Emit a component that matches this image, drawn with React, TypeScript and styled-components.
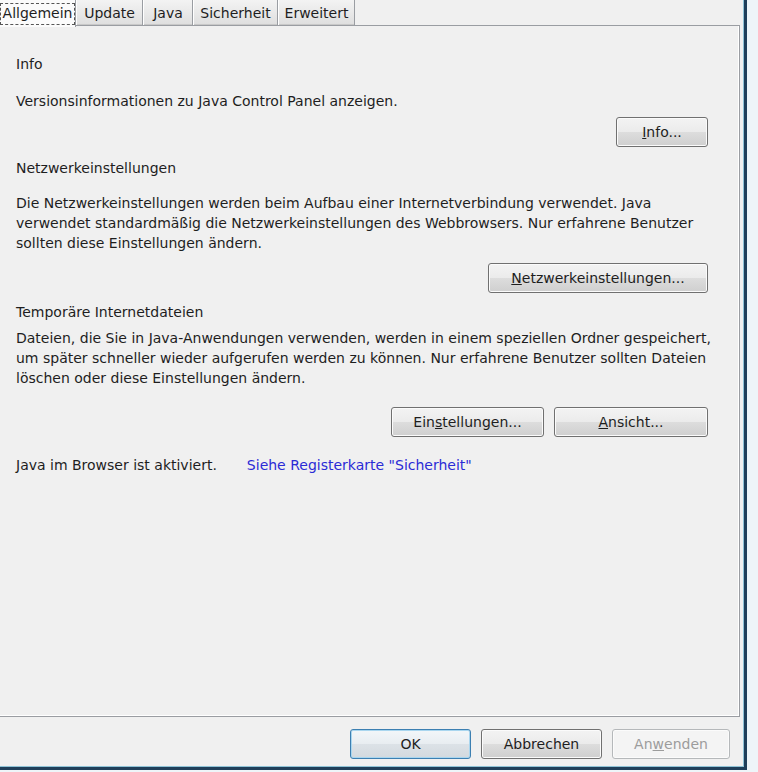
import styled, {createGlobalStyle} from "styled-components";

const GlobalStyle = createGlobalStyle`
  html, body {
    margin: 0;
    padding: 0;
    background: #eef5f9;
  }
  body {
    font-family: "DejaVu Sans", Tahoma, sans-serif;
    font-size: 14px;
    color: #1e1e1e;
  }
`;

const Window = styled.div`
  width: 744px;
  height: 767px;
  background: #f0f0f0;
  border-right: 3px solid #1f3f5a;
  border-bottom: 3px solid #1f3f5a;
  box-shadow: inset -1px -1px 0 #8fc3d6;
  display: flex;
  flex-direction: column;
`;

const TabStrip = styled.div`
  height: 25px;
  display: flex;
  align-items: flex-start;
  position: relative;
  z-index: 1;
`;

const Tab = styled.div<{ active?: boolean }>`
  display: flex;
  align-items: ${(p) => (p.active ? "flex-start" : "center")};
  justify-content: center;
  box-sizing: border-box;
  height: ${(p) => (p.active ? "27px" : "25px")};
  padding: 0 2px;
  background: ${(p) =>
    p.active ? "#fbfbfb" : "linear-gradient(#f3f3f3, #e9e9e9 50%, #dedede)"};
  border-right: 1px solid #9a9da2;
  border-left: ${(p) => (p.active ? "none" : "1px solid #fff")};
  box-shadow: ${(p) => (p.active ? "none" : "inset 0 -1px 0 #c8c8c8")};
  white-space: nowrap;
  font-size: 14px;
`;

const FocusLabel = styled.span`
  display: block;
  box-sizing: border-box;
  margin-top: 3px;
  height: 22px;
  line-height: 19px;
  padding: 0 2px;
  border: 1px dashed #555;
`;

const Panel = styled.div`
  width: 740px;
  height: 692px;
  box-sizing: border-box;
  border-top: 1px solid #9a9da2;
  border-right: 1px solid #9a9da2;
  border-bottom: 1px solid #9a9da2;
  box-shadow: inset -1px -1px 0 #ffffff;
  padding: 28px 31px 0 16px;
  display: flex;
  flex-direction: column;
`;

const Line = styled.div<{ gap?: number }>`
  line-height: 20px;
  white-space: nowrap;
  margin-top: ${(p) => p.gap ?? 0}px;
`;

const ButtonRow = styled.div<{ gap?: number }>`
  display: flex;
  justify-content: flex-end;
  gap: 10px;
  margin-top: ${(p) => p.gap ?? 0}px;
`;

const Button = styled.button<{ width: number; variant?: "default" | "disabled" }>`
  width: ${(p) => p.width}px;
  height: 30px;
  box-sizing: border-box;
  border: 1px solid
    ${(p) =>
      p.variant === "default" ? "#3c7fb1" : p.variant === "disabled" ? "#b5b8ba" : "#707070"};
  border-radius: 3px;
  background: ${(p) =>
    p.variant === "disabled"
      ? "#f4f4f4"
      : p.variant === "default"
      ? "linear-gradient(#f2f6f9, #e8edf1 50%, #dce2e7 50%, #d3d9de)"
      : "linear-gradient(#f3f3f3, #ebebeb 50%, #dddddd 50%, #cfcfcf)"};
  box-shadow: inset 0 0 0 1px
    ${(p) => (p.variant === "default" ? "#a9d6ef" : "#fbfbfb")};
  font-family: "DejaVu Sans", Tahoma, sans-serif;
  font-size: 14px;
  color: ${(p) => (p.variant === "disabled" ? "#9c9c9c" : "#1e1e1e")};
  padding: 0;
`;

const Link = styled.span`
  color: #2b2bd6;
  margin-left: 30px;
`;

const Footer = styled.div`
  display: flex;
  justify-content: flex-end;
  gap: 10px;
  padding: 12px 14px 0 0;
`;

export default function App() {
  return (
    <>
      <GlobalStyle/>
      <Window>
        <TabStrip>
          <Tab active style={{width: 76}}>
            <FocusLabel>Allgemein</FocusLabel>
          </Tab>
          <Tab style={{width: 67}}>Update</Tab>
          <Tab style={{width: 50}}>Java</Tab>
          <Tab style={{width: 85}}>Sicherheit</Tab>
          <Tab style={{width: 77}}>Erweitert</Tab>
        </TabStrip>
        <Panel>
          <Line>Info</Line>
          <Line gap={17}>Versionsinformationen zu Java Control Panel anzeigen.</Line>
          <ButtonRow gap={6}>
            <Button width={92}><u>I</u>nfo...</Button>
          </ButtonRow>

          <Line gap={11}>Netzwerkeinstellungen</Line>
          <Line gap={15}>
            Die Netzwerkeinstellungen werden beim Aufbau einer Internetverbindung verwendet. Java<br/>
            verwendet standardmäßig die Netzwerkeinstellungen des Webbrowsers. Nur erfahrene Benutzer<br/>
            sollten diese Einstellungen ändern.
          </Line>
          <ButtonRow gap={10}>
            <Button width={220}><u>N</u>etzwerkeinstellungen...</Button>
          </ButtonRow>

          <Line gap={9}>Temporäre Internetdateien</Line>
          <Line gap={6}>
            Dateien, die Sie in Java-Anwendungen verwenden, werden in einem speziellen Ordner gespeichert,<br/>
            um später schneller wieder aufgerufen werden zu können. Nur erfahrene Benutzer sollten Dateien<br/>
            löschen oder diese Einstellungen ändern.
          </Line>
          <ButtonRow gap={19}>
            <Button width={153}>Ein<u>s</u>tellungen...</Button>
            <Button width={154}><u>A</u>nsicht...</Button>
          </ButtonRow>

          <Line gap={18}>
            Java im Browser ist aktiviert.
            <Link>Siehe Registerkarte "Sicherheit"</Link>
          </Line>
        </Panel>
        <Footer>
          <Button width={121} variant="default">OK</Button>
          <Button width={121}>Abbrechen</Button>
          <Button width={118} variant="disabled">An<u>w</u>enden</Button>
        </Footer>
      </Window>
    </>
  );
}
